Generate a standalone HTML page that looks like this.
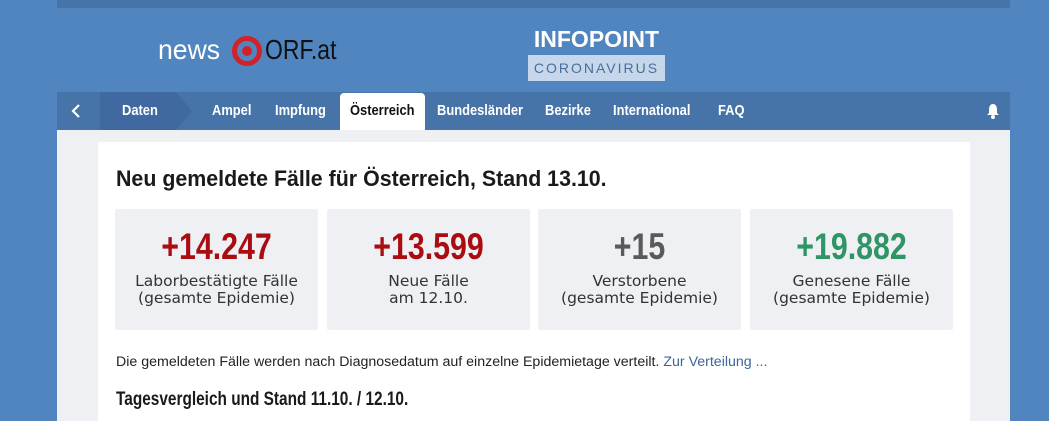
<!DOCTYPE html>
<html><head><meta charset="utf-8"><style>
*{margin:0;padding:0;box-sizing:border-box}
body{width:1049px;height:421px;overflow:hidden;background:#5085c0;font-family:"Liberation Sans",sans-serif;position:relative}
.a{position:absolute}
.s{display:inline-block;transform-origin:0 50%;white-space:nowrap}
.nav span{position:absolute;top:0;line-height:38px;color:#fff;font-weight:bold;font-size:15px;transform:scaleX(.86);transform-origin:0 50%;white-space:nowrap}
.box{position:absolute;top:209px;width:203px;height:121px;background:#eff0f3;text-align:center;border-radius:2px}
.box b{display:block;margin-top:18px;font-size:37px;line-height:40px;transform:scaleX(.82)}
.box p{font-family:"DejaVu Sans",sans-serif;font-size:15.5px;line-height:17px;color:#333;margin-top:6px}
</style></head><body>
<div class="a" style="left:57px;top:0;width:953px;height:8px;background:#4673a8"></div>
<div class="a s" style="left:158px;top:34px;font-size:28px;color:#fff;line-height:32px;transform:scaleX(.95)">news</div>
<svg class="a" style="left:232px;top:36px" width="30" height="30" viewBox="0 0 30 30"><circle cx="15" cy="15" r="12.5" fill="none" stroke="#d1222a" stroke-width="5"/><circle cx="15" cy="15" r="5" fill="#d1222a"/></svg>
<div class="a s" style="left:265px;top:34px;font-size:28px;color:#111;line-height:32px;transform:scaleX(.82)">ORF.at</div>
<div class="a" style="left:528px;top:26px;width:137px;font-weight:bold;font-size:23px;color:#fff;text-align:center;line-height:26px">INFOPOINT</div>
<div class="a" style="left:528px;top:55px;width:137px;height:26px;background:#c6d6eb;color:#4a6f9a;font-size:14px;letter-spacing:2px;text-align:center;line-height:26px">CORONAVIRUS</div>
<div class="a nav" style="left:57px;top:92px;width:953px;height:38px;background:#4673a8">
<svg class="a" style="left:13px;top:11px" width="12" height="16"><path d="M9 2 L3 8 L9 14" stroke="#fff" stroke-width="2.2" fill="none"/></svg>
<div class="a" style="left:43px;top:0;width:92px;height:38px;background:#3f69a0;clip-path:polygon(0 0,76px 0,92px 19px,76px 38px,0 38px)"></div>
<span style="left:65px">Daten</span>
<span style="left:155px">Ampel</span>
<span style="left:218px">Impfung</span>
<div class="a" style="left:283px;top:1px;width:85px;height:37px;background:#fff;border-radius:4px 4px 0 0"></div>
<span style="left:293px;color:#111">Österreich</span>
<span style="left:380px">Bundesländer</span>
<span style="left:488px">Bezirke</span>
<span style="left:556px">International</span>
<span style="left:661px">FAQ</span>
<svg class="a" style="left:929px;top:11px" width="14" height="16" viewBox="0 0 14 16"><path d="M7 1 C4 1 3 4 3 7 L3 10 L1 12 L13 12 L11 10 L11 7 C11 4 10 1 7 1Z" fill="#fff"/><circle cx="7" cy="14" r="2" fill="#fff"/></svg>
</div>
<div class="a" style="left:57px;top:130px;width:953px;height:291px;background:#eff0f4"></div>
<div class="a" style="left:98px;top:142px;width:872px;height:279px;background:#fff"></div>
<div class="a s" style="left:116px;top:164px;font-size:22.5px;font-weight:bold;color:#1a1a1a;line-height:30px;transform:scaleX(.95)">Neu gemeldete Fälle für Österreich, Stand 13.10.</div>
<div class="box" style="left:115px"><b style="color:#a90d12">+14.247</b><p>Laborbestätigte Fälle<br>(gesamte Epidemie)</p></div>
<div class="box" style="left:327px"><b style="color:#a90d12">+13.599</b><p>Neue Fälle<br>am 12.10.</p></div>
<div class="box" style="left:538px"><b style="color:#5a5a5a">+15</b><p>Verstorbene<br>(gesamte Epidemie)</p></div>
<div class="box" style="left:750px"><b style="color:#2f9566">+19.882</b><p>Genesene Fälle<br>(gesamte Epidemie)</p></div>
<div class="a s" style="left:116px;top:353px;font-size:14.2px;color:#222;line-height:18px">Die gemeldeten Fälle werden nach Diagnosedatum auf einzelne Epidemietage verteilt. <span style="color:#3d6699">Zur Verteilung ...</span></div>
<div class="a s" style="left:116px;top:389px;font-size:19px;font-weight:bold;color:#1a1a1a;line-height:22px;transform:scaleX(.81)">Tagesvergleich und Stand 11.10. / 12.10.</div>
</body></html>
